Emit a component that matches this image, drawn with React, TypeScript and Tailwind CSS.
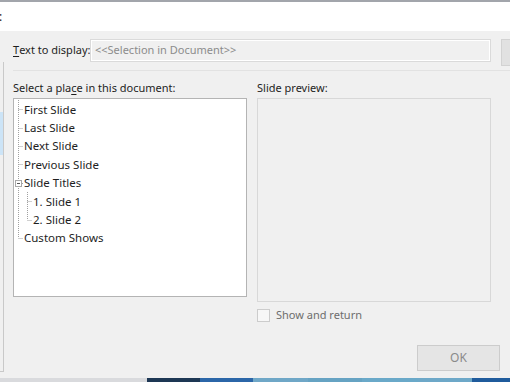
const rows = [
  { label: 'First Slide', child: false },
  { label: 'Last Slide', child: false },
  { label: 'Next Slide', child: false },
  { label: 'Previous Slide', child: false },
  { label: 'Slide Titles', child: false },
  { label: '1. Slide 1', child: true },
  { label: '2. Slide 2', child: true },
  { label: 'Custom Shows', child: false },
];

const centers = [10.2, 28.6, 47, 65.4, 83.8, 102.2, 120.6, 139];

function TreeLines() {
  return (
    <svg className="absolute left-0 top-0" width="40" height="160" fill="none">
      <g stroke="#a0a0a0" strokeWidth="1" strokeDasharray="1 1">
        <line x1="4.5" y1="1" x2="4.5" y2="80" />
        <line x1="4.5" y1="87" x2="4.5" y2="139" />
        {centers.map((c, i) =>
          i === 5 || i === 6 ? (
            <line key={i} x1="13.5" y1={Math.round(c) + 0.5} x2="18" y2={Math.round(c) + 0.5} />
          ) : i === 4 ? null : (
            <line key={i} x1="4.5" y1={Math.round(c) + 0.5} x2="9" y2={Math.round(c) + 0.5} />
          ),
        )}
        <line x1="8" y1="84.5" x2="9" y2="84.5" />
        <line x1="13.5" y1="93" x2="13.5" y2="121" />
      </g>
      <rect x="1.5" y="81.5" width="6" height="6" stroke="#a8a8a8" fill="#fff" />
      <line x1="3" y1="84.5" x2="6" y2="84.5" stroke="#555" />
    </svg>
  );
}

export default function App() {
  return (
    <div className="w-[510px] h-[382px] overflow-hidden bg-[#f0f0f0] flex flex-col text-[11px] text-[#1e1e1e] font-['Noto_Sans',sans-serif]">
      {/* title bar */}
      <div className="h-[2px] shrink-0 bg-[#a2a5ab]" />
      <div className="h-[29px] shrink-0 bg-white flex items-center text-[12px]">
        <span className="leading-none -ml-[1px]">:</span>
      </div>

      <div className="flex h-[347px] shrink-0">
        {/* link-to sidebar, cut off on the left */}
        <div className="w-[4px] shrink-0 mt-[31px] h-[310px] border-r border-b border-[#c9c9c9] bg-[#f0f0f0] flex flex-col">
          <div className="mt-[50px] h-[43px] bg-[#cce4f7]" />
        </div>

        <div className="flex-1 min-w-0 pl-[9px] pt-[8px]">
          {/* text to display */}
          <div className="flex items-start h-[23px]">
            <span className="w-[77px] shrink-0 whitespace-nowrap h-[23px] flex items-center">
              <span className="underline underline-offset-2">T</span>ext to display:
            </span>
            <div className="w-[401px] shrink-0 h-[23px] border border-[#dadada] flex">
              <div className="flex-1 border border-white flex items-center pl-[3px] text-[#8c8c8c] whitespace-nowrap">
                &lt;&lt;Selection in Document&gt;&gt;
              </div>
            </div>
            <div className="ml-[10px] w-[40px] shrink-0 h-[27px] bg-[#e1e1e1] border border-[#d2d2d2]" />
          </div>

          <div className="mt-[8px] h-px bg-[#e2e2e2]" />

          {/* labels */}
          <div className="flex mt-[9px] h-[16px] items-center whitespace-nowrap">
            <span className="w-[244px]">
              Select a pla<span className="underline underline-offset-2">c</span>e in this document:
            </span>
            <span>Slide preview:</span>
          </div>

          <div className="flex gap-[10px] mt-[2px]">
            {/* tree */}
            <div className="w-[234px] shrink-0 h-[199px] bg-white border border-[#b4b4b4] relative pt-[1px]">
              <TreeLines />
              {rows.map((r) => (
                <div
                  key={r.label}
                  className={
                    'h-[18.4px] flex items-center whitespace-nowrap text-[11.5px] ' +
                    (r.child ? 'pl-[19px]' : 'pl-[10px]')
                  }
                >
                  {r.label}
                </div>
              ))}
            </div>

            {/* preview */}
            <div className="flex flex-col">
              <div className="w-[234px] h-[204px] border border-[#d8d8d8] bg-[#f0f0f0]" />
              <div className="flex items-center mt-[7px] h-[13px]">
                <div className="w-[13px] h-[13px] bg-[#f7f7f7] border border-[#cccccc]" />
                <span className="ml-[6px] text-[#6d6d6d]">Show and return</span>
              </div>
            </div>
          </div>

          <div className="flex justify-end pr-[10px] mt-[23px]">
            <div className="w-[83px] h-[26px] bg-[#e5e5e5] border border-[#cccccc] flex items-center justify-center text-[#8a8a8a] text-[12px]">
              OK
            </div>
          </div>
        </div>
      </div>

      {/* taskbar peeking at the bottom */}
      <div className="h-[4px] shrink-0 flex">
        <div className="w-[147px] bg-[#d9dadd]" />
        <div className="w-[53px] bg-[#1d3754]" />
        <div className="w-[53px] bg-[#2b66a8]" />
        <div className="w-[55px] bg-[#6fa7c7]" />
        <div className="w-[54px] bg-[#66a3c3]" />
        <div className="w-[56px] bg-[#6aa9c9]" />
        <div className="w-[54px] bg-[#6da8c8]" />
        <div className="flex-1 bg-[#1f5b9c]" />
      </div>
    </div>
  );
}
